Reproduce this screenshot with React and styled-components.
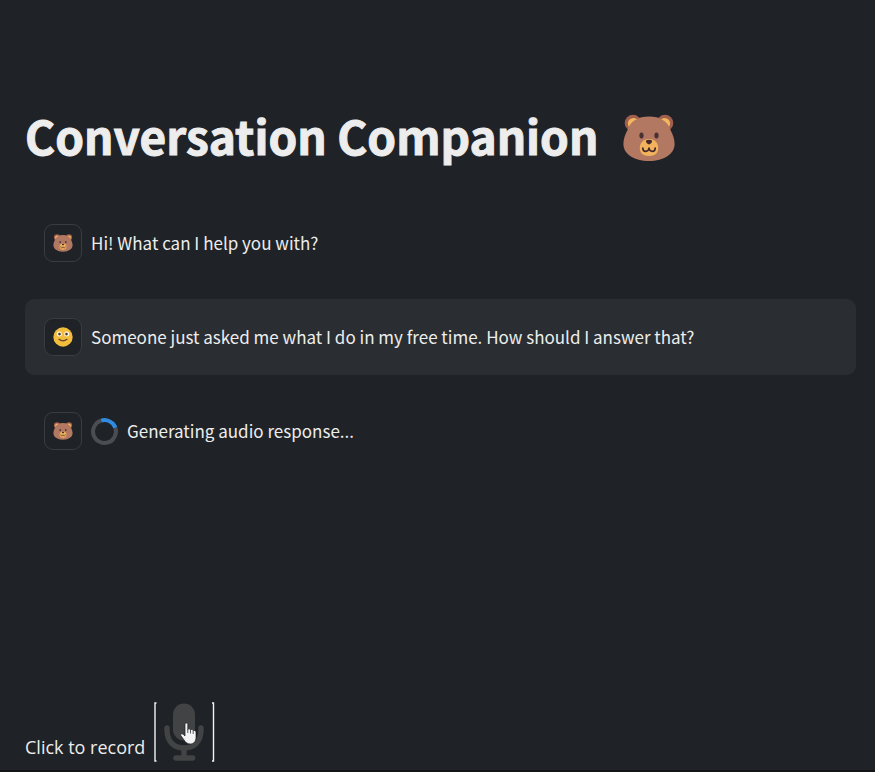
import React from "react";
import styled, { createGlobalStyle, keyframes } from "styled-components";

const GlobalStyle = createGlobalStyle`
  *, *::before, *::after { box-sizing: border-box; }
  body {
    margin: 0;
    background: #1f2226;
    color: #ededed;
    font-family: "Noto Sans CJK SC", "Noto Sans CJK JP", "Noto Sans", sans-serif;
  }
`;

const Page = styled.main`
  display: flex;
  flex-direction: column;
  min-height: 100vh;
  padding: 98px 19px 8px 25px;
  border-bottom: 2px solid #131416;
`;

const Title = styled.h1`
  display: flex;
  align-items: center;
  gap: 24px;
  margin: 0 0 33px;
  font-size: 46px;
  font-weight: 700;
  line-height: 74px;
  -webkit-text-stroke: 1px #ededed;

  svg { margin-top: 6px; }
`;

const Messages = styled.section`
  display: flex;
  flex-direction: column;
  gap: 18px;
`;

const Message = styled.article`
  display: flex;
  align-items: center;
  gap: 9px;
  min-height: 76px;
  padding: 19px;
  border-radius: 9px;
  background: ${({ $user }) => ($user ? "#2a2d31" : "transparent")};
`;

const Avatar = styled.div`
  display: flex;
  flex: none;
  align-items: center;
  justify-content: center;
  width: 38px;
  height: 38px;
  border: 1px solid #393c40;
  border-radius: 9px;
  background: #1f2226;
`;

const MessageText = styled.p`
  margin: 0;
  font-size: 17px;
  line-height: 28px;
`;

const Status = styled.div`
  display: flex;
  align-items: center;
  gap: 9px;
`;

const spin = keyframes`
  from { transform: rotate(27deg); }
  to { transform: rotate(387deg); }
`;

const Spinner = styled.span`
  flex: none;
  width: 27px;
  height: 27px;
  border: 4px solid #4a4d51;
  border-top-color: #2f8be0;
  border-radius: 50%;
  transform: rotate(27deg);
  animation: ${spin} 1s linear infinite paused;
`;

const Recorder = styled.div`
  display: flex;
  align-items: flex-end;
  gap: 9px;
  margin-top: auto;
`;

const RecordLabel = styled.label`
  font-family: "Open Sans", "Noto Sans", sans-serif;
  font-size: 18px;
  line-height: 30px;
`;

const RecordButton = styled.button`
  position: relative;
  width: 61px;
  height: 60px;
  padding: 0;
  border: 0;
  background: transparent;
  cursor: pointer;
`;

const Drawing = styled.svg`
  display: block;
  flex: none;
`;

const Pointer = styled(Drawing)`
  position: absolute;
  top: 20px;
  left: 26px;
`;

function Bear({ width, height }) {
  return (
    <Drawing width={width} height={height} viewBox="0 0 52 48" role="img" aria-label="Bear" stroke="none">
      <circle cx="10" cy="9" r="8.3" fill="#a1604f" />
      <circle cx="42" cy="9" r="8.3" fill="#a1604f" />
      <circle cx="10.5" cy="9.5" r="5.6" fill="#f4b65c" />
      <circle cx="41.5" cy="9.5" r="5.6" fill="#f4b65c" />
      <path d="M26 2.5C15 2.5 7.5 7 4.5 16C2 21 .4 25 .4 30C.4 40 11 47 26 47S51.6 40 51.6 30C51.6 25 50 21 47.5 16C44.5 7 37 2.5 26 2.5Z" fill="#b27861" />
      <ellipse cx="18.5" cy="21.5" rx="2.1" ry="3" fill="#493033" />
      <ellipse cx="33.5" cy="21.5" rx="2.1" ry="3" fill="#493033" />
      <path d="M26 25C20 25 16.8 29 16.8 34C16.8 39 20 42 26 42S35.2 39 35.2 34C35.2 29 32 25 26 25Z" fill="#f2b35c" />
      <path d="M23 26.5Q26 25 29 26.5Q29.5 29 26 30.5Q22.5 29 23 26.5Z" fill="#44292d" />
      <path d="M19.8 34C19.8 38.5 25.5 38.5 26 34C26.5 38.5 32.2 38.5 32.2 34" fill="none" stroke="#44292d" strokeWidth="1.7" strokeLinecap="round" strokeLinejoin="round" />
    </Drawing>
  );
}

function Smiley() {
  return (
    <Drawing width="20" height="20" viewBox="0 0 20 20" role="img" aria-label="Smiling face">
      <circle cx="10" cy="10" r="9.7" fill="#f2bd3d" />
      <circle cx="6.3" cy="6.9" r="2.5" fill="#fff6e5" />
      <circle cx="13.7" cy="6.9" r="2.5" fill="#fff6e5" />
      <circle cx="6.5" cy="7.1" r="1.3" fill="#44352d" />
      <circle cx="13.5" cy="7.1" r="1.3" fill="#44352d" />
      <path d="M6 12.3Q10 15.3 14 12.3" fill="none" stroke="#65402a" strokeWidth="1.2" strokeLinecap="round" />
    </Drawing>
  );
}

function Microphone() {
  return (
    <Drawing width="61" height="60" viewBox="0 0 61 60" aria-hidden="true">
      <path d="M2.5 1H1V59H2.5M58 1H59.5V59H58" fill="none" stroke="#f2f2f2" strokeWidth="1.4" />
      <rect x="19" y="1.5" width="22" height="37" rx="11" fill="#424344" />
      <path d="M13 26V28C13 39 19.5 46 30 46S47 39 47 28V26" fill="none" stroke="#424344" strokeWidth="5.4" strokeLinecap="round" />
      <path d="M30 46V56M22 56H38.5" fill="none" stroke="#424344" strokeWidth="5.6" strokeLinecap="round" />
    </Drawing>
  );
}

function HandPointer() {
  return (
    <Pointer width="18" height="24" viewBox="0 0 18 24" aria-hidden="true">
      <path d="M5 2.2C5 .7 7.8 .7 7.8 2.2V7.5C8.5 6.3 10.3 6.7 10.5 8C11.5 6.9 13 7.5 13.2 8.7C14.5 7.9 16 8.7 16 10.2V15.5C16 19 14 22 10.5 22C7 22 5.3 20 3.7 17.5L.8 13.5C.1 12.2 2 11.2 3.3 12.4L5 14Z" fill="#f4f4f4" stroke="#202124" strokeWidth=".7" />
      <path d="M7.8 7V11M10.5 8V11.5M13.2 9V12" stroke="#303236" strokeWidth=".8" />
    </Pointer>
  );
}

function ChatMessage({ user = false, children }) {
  return (
    <Message $user={user}>
      <Avatar>{user ? <Smiley /> : <Bear width="20" height="18" />}</Avatar>
      {children}
    </Message>
  );
}

export default function App() {
  return (
    <>
      <GlobalStyle />
      <Page>
        <Title>
          Conversation Companion
          <Bear width="54" height="48" />
        </Title>
        <Messages aria-label="Conversation">
          <ChatMessage>
            <MessageText>Hi! What can I help you with?</MessageText>
          </ChatMessage>
          <ChatMessage user>
            <MessageText>Someone just asked me what I do in my free time. How should I answer that?</MessageText>
          </ChatMessage>
          <ChatMessage>
            <Status role="status">
              <Spinner aria-hidden="true" />
              <MessageText>Generating audio response...</MessageText>
            </Status>
          </ChatMessage>
        </Messages>
        <Recorder>
          <RecordLabel htmlFor="record">Click to record</RecordLabel>
          <RecordButton id="record" type="button">
            <Microphone />
            <HandPointer />
          </RecordButton>
        </Recorder>
      </Page>
    </>
  );
}
